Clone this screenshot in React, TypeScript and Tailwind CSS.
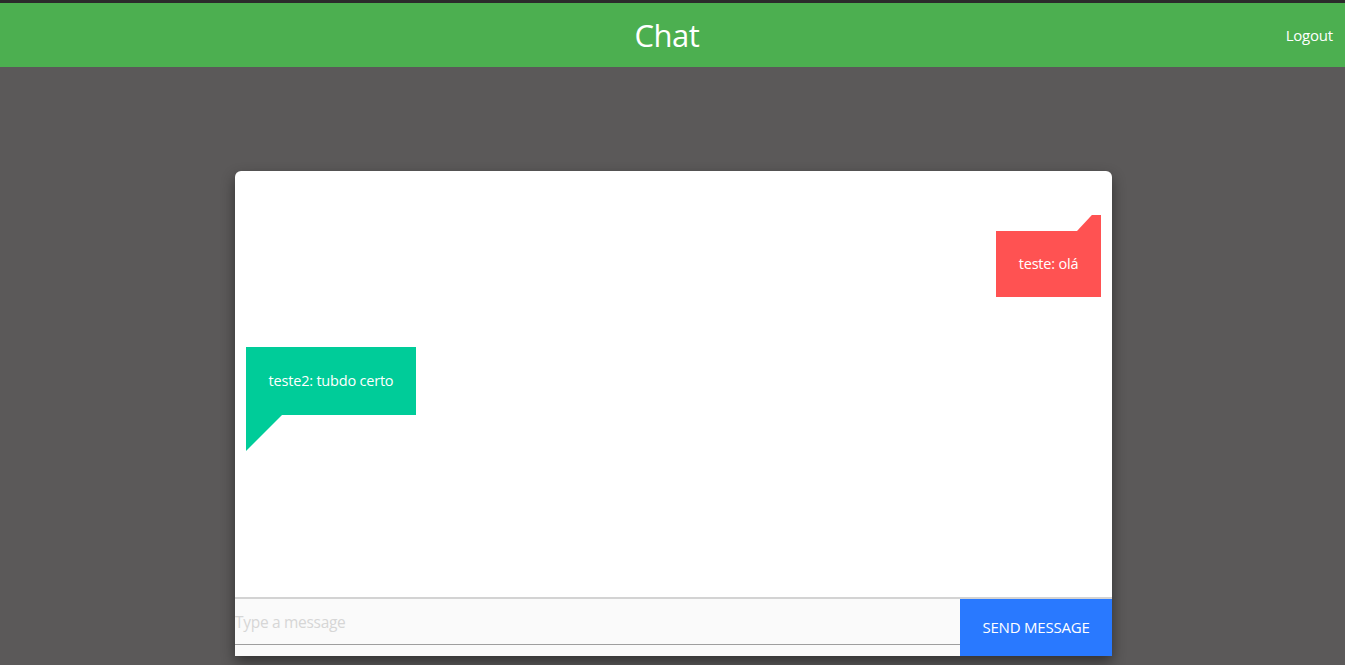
import React from "react";

const App = () => {
  return (
    <div className="min-h-screen w-full bg-[#5b5959] border-t-[3px] border-[#2b2b2b] font-['Open_Sans','Noto_Sans',sans-serif]">
      <header className="h-[64px] bg-[#4caf50] grid grid-cols-[1fr_auto_1fr] items-center text-white">
        <div />
        <h1 className="text-[31px] leading-none tracking-[-0.5px] pr-[11px] pt-[1px]">Chat</h1>
        <div className="flex justify-end pr-[12px]">
          <button type="button" className="text-[15px] tracking-[-0.2px] pt-[1px]">
            Logout
          </button>
        </div>
      </header>

      <div className="ml-[235px] mt-[104px] w-[877px] h-[485px] bg-white rounded-t-[6px] shadow-[0_6px_14px_rgba(0,0,0,0.45)] flex flex-col">
        <div className="h-[426px] flex flex-col px-[11px] pt-[44px]">
          <div className="self-end flex flex-col items-end">
            <div className="w-[24px] h-[16px] bg-[#ff5252] [clip-path:polygon(0_100%,62%_0,100%_0,100%_100%)]" />
            <div className="w-[105px] h-[66px] bg-[#ff5252] text-white text-[14.5px] flex items-center justify-center tracking-[-0.2px]">
              teste: olá
            </div>
          </div>

          <div className="self-start mt-[50px] flex flex-col items-start">
            <div className="w-[170px] h-[68px] bg-[#00cc99] text-white text-[14.5px] flex items-center justify-center tracking-[-0.2px]">
              teste2: tubdo certo
            </div>
            <div className="w-[36px] h-[36px] bg-[#00cc99] [clip-path:polygon(0_0,100%_0,0_100%)]" />
          </div>
        </div>

        <div className="flex-1 flex border-t-2 border-[#d3d3d3]">
          <div className="flex-1 bg-[#fafafa] flex flex-col">
            <input
              type="text"
              placeholder="Type a message"
              className="h-[46px] w-full bg-[#fafafa] border-b border-[#9e9e9e] outline-none text-[15.5px] placeholder:text-[#d6d6d6] tracking-[-0.3px]"
            />
          </div>
          <button
            type="button"
            className="w-[152px] bg-[#2979ff] text-white text-[15px] tracking-[-0.2px]"
          >
            SEND MESSAGE
          </button>
        </div>
      </div>
    </div>
  );
};

export default App;
